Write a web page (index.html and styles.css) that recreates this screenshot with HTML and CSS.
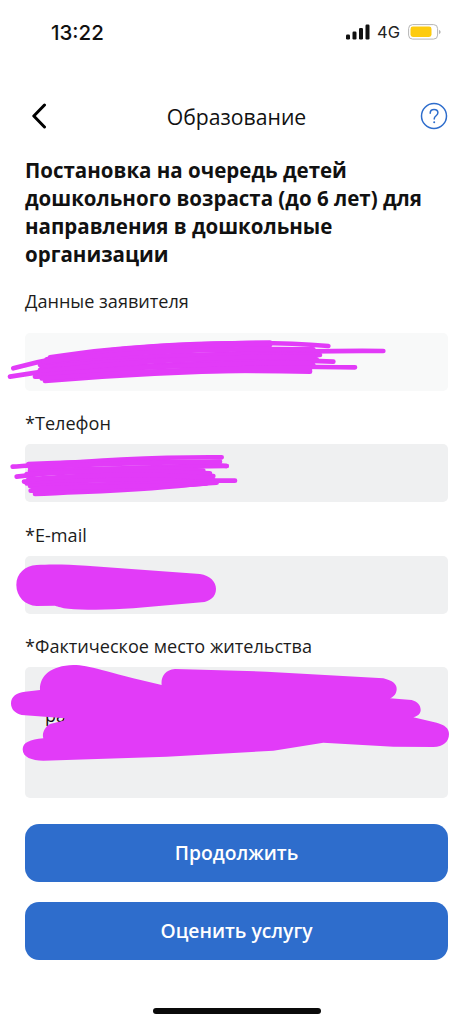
FILE: index.html
```html
<!DOCTYPE html>
<html lang="ru">
<head>
<meta charset="utf-8">
<title>Образование</title>
<link rel="stylesheet" href="styles.css">
</head>
<body>
<div class="page">
  <div class="status">
    <span class="time">13:22</span>
    <div class="status-right">
      <svg class="signal" width="24" height="16" viewBox="0 0 24 16"><rect x="0" y="10.5" width="4" height="5" rx="1.2"/><rect x="6.5" y="7.5" width="4" height="8" rx="1.2"/><rect x="13" y="4" width="4" height="11.5" rx="1.2"/><rect x="19.5" y="0.5" width="4" height="15" rx="1.2"/></svg>
      <span class="net">4G</span>
      <svg class="battery" width="34" height="16" viewBox="0 0 34 16"><rect x="0.6" y="0.6" width="29" height="14.5" rx="4" fill="none" stroke="#b5b5b5" stroke-width="1"/><rect x="2.5" y="2.5" width="21" height="10.5" rx="2.4" fill="#fdcb0e"/><path d="M31 6v4c1-.3 1.6-1 1.6-2s-.6-1.700-1.600-2z" fill="#b5b5b5"/></svg>
    </div>
  </div>
  <header class="nav">
    <svg class="back" width="16" height="26" viewBox="0 0 16 26"><path d="M13.500 2 2.800 13l10.700 11" fill="none" stroke="#000" stroke-width="3" stroke-linecap="round" stroke-linejoin="round"/></svg>
    <h1 class="nav-title">Образование</h1>
    <svg class="help" width="28" height="28" viewBox="0 0 28 28"><circle cx="14" cy="14" r="12.500" fill="none" stroke="#2e6dcc" stroke-width="1.500"/><path d="M10.200 11.200c0-2.300 1.700-3.700 3.900-3.700s3.800 1.300 3.800 3.300c0 3-3.700 3-3.700 6.200" fill="none" stroke="#2e6dcc" stroke-width="1.500" stroke-linecap="round"/><circle cx="14.200" cy="20.300" r="1" fill="#2e6dcc"/></svg>
  </header>
  <h2 class="heading">Постановка на очередь детей дошкольного возраста (до 6 лет) для направления в дошкольные организации</h2>
  <form class="form">
    <div class="group group-first">
      <div class="label">Данные заявителя</div>
      <div class="field field-readonly"></div>
    </div>
    <div class="group">
      <div class="label">*Телефон</div>
      <div class="field"></div>
    </div>
    <div class="group">
      <div class="label">*E-mail</div>
      <div class="field"></div>
    </div>
    <div class="group">
      <div class="label">*Фактическое место жительства</div>
      <div class="field field-tall"><span class="field-text">ра</span></div>
    </div>
    <div class="actions">
      <button class="btn" type="button">Продолжить</button>
      <button class="btn" type="button">Оценить услугу</button>
    </div>
  </form>
  <div class="home"></div>
  <svg class="scribbles" width="473" height="1024" viewBox="0 0 473 1024">
    <g transform="translate(0 320) scale(.33333)" class="thin">
      <path d="M40 145C200 100 400 72 810 68"/>
      <path d="M150 112C350 80 700 55 985 78"/>
      <path d="M140 118C400 85 700 75 810 75"/>
      <path d="M30 170C300 125 600 90 1150 93"/>
      <path d="M120 135C400 100 700 100 960 105"/>
      <path d="M125 143C400 112 700 115 1000 125"/>
      <path d="M105 170C400 130 700 125 950 118"/>
      <path d="M115 160C400 135 700 135 940 135"/>
      <path d="M120 150C400 130 800 140 1065 142"/>
      <path d="M110 170C400 150 700 150 930 155"/>
      <path d="M135 183C400 160 700 150 930 150"/>
      <path d="M130 125C400 92 700 85 940 88"/>
      <path d="M125 155C400 122 700 108 940 110"/>
      <path d="M120 165C400 142 700 128 930 128"/>
      <path d="M125 175C400 155 700 142 930 143"/>
      <path d="M38 440C250 425 450 410 665 412"/>
      <path d="M85 432C250 425 500 420 680 438"/>
      <path d="M50 470C250 445 450 440 680 438"/>
      <path d="M90 452C250 445 500 442 610 452"/>
      <path d="M72 485C300 465 500 470 640 468"/>
      <path d="M80 490C300 475 500 482 705 482"/>
      <path d="M90 498C300 490 500 495 640 480"/>
      <path d="M92 512C250 505 450 505 620 490"/>
      <path d="M105 522C300 512 450 510 600 490"/>
      <path d="M90 443C250 432 450 428 660 425"/>
      <path d="M80 462C250 455 450 452 630 460"/>
      <path d="M85 478C300 462 500 462 630 474"/>
      <path d="M100 506C300 498 500 500 650 488"/>
    </g>
    <g transform="translate(0 550) scale(.33333)" class="solid">
      <path d="M110 45C150 42 200 43 260 47L600 72C630 76 648 95 648 117 648 140 630 155 605 157L400 175C330 180 250 180 205 176 185 174 175 170 165 167L110 168C75 166 49 140 49 105 49 70 75 47 110 45Z"/>
      <path d="M120 420C118 380 150 347 220 345 270 345 310 365 485 405 482 380 495 360 525 357L800 365 1150 385C1178 392 1190 402 1190 417 1190 430 1182 440 1170 445L1235 450C1252 455 1262 465 1262 480 1262 490 1255 498 1240 502L1310 518C1335 525 1347 535 1347 552 1347 575 1330 590 1300 591L1180 590 970 578 820 602 500 620 130 632C95 632 68 622 68 598 68 578 90 568 130 565 125 550 135 530 150 522L190 512 195 505 135 500 65 495C45 490 33 478 33 460 33 440 50 427 75 425Z"/>
    </g>
  </svg>
</div>
</body>
</html>
```
FILE: styles.css
```css
* { box-sizing: border-box; }
html, body { margin: 0; padding: 0; background: #fff; }
body { font-family: "Open Sans", "Noto Sans", sans-serif; color: #111; }
.page { position: relative; width: 473px; height: 1024px; overflow: hidden; }

.status { height: 64px; display: flex; align-items: center; justify-content: space-between; padding: 0 31px 0 51px; }
.time { font-family: Inter, sans-serif; font-weight: 500; font-size: 20.500px; color: #111; }
.status-right { display: flex; align-items: center; gap: 7px; }
.signal { fill: #111; }
.net { font-family: Inter, sans-serif; font-size: 16.500px; color: #222; margin-right: 1px; }

.nav { height: 40px; margin-top: 32px; padding: 0 25px 0 31px; display: grid; grid-template-columns: 1fr auto 1fr; align-items: center; }
.nav-title { margin: 0 3px 0 -3px; font-size: 21.200px; font-weight: 500; color: #111; }
.help { justify-self: end; }

.heading { margin: 20px 0 0; padding: 0 25px; font-size: 20.500px; line-height: 28px; font-weight: 700; color: #111; }

.form { margin-top: 20.500px; padding: 0 25px; display: flex; flex-direction: column; gap: 20.500px; }
.group { display: flex; flex-direction: column; gap: 9px; }
.group-first { gap: 20px; }
.label { font-size: 18.100px; line-height: 24px; color: #1c1c1c; }
.field { height: 58px; border-radius: 5px; background: #eff0f1; padding: 36px 20px 0; }
.field-readonly { background: #f8f9f9; }
.field-tall { height: 131px; }
.field-text { font-size: 18px; line-height: 24px; color: #111; }

.actions { display: flex; flex-direction: column; gap: 20px; margin-top: 5.500px; }
.btn { height: 58px; padding: 0 0 2px; border: 0; border-radius: 14px; background: #2e6dcc; color: #fff; font-family: inherit; font-size: 19.300px; font-weight: 600; }

.home { position: absolute; left: 153px; top: 1008px; width: 168px; height: 6px; border-radius: 3px; background: #0a0a0a; }

.scribbles { position: absolute; left: 0; top: 0; pointer-events: none; }
.thin path { fill: none; stroke: #e23bf8; stroke-width: 14; stroke-linecap: round; }
.solid path { fill: #e23bf8; }
```
